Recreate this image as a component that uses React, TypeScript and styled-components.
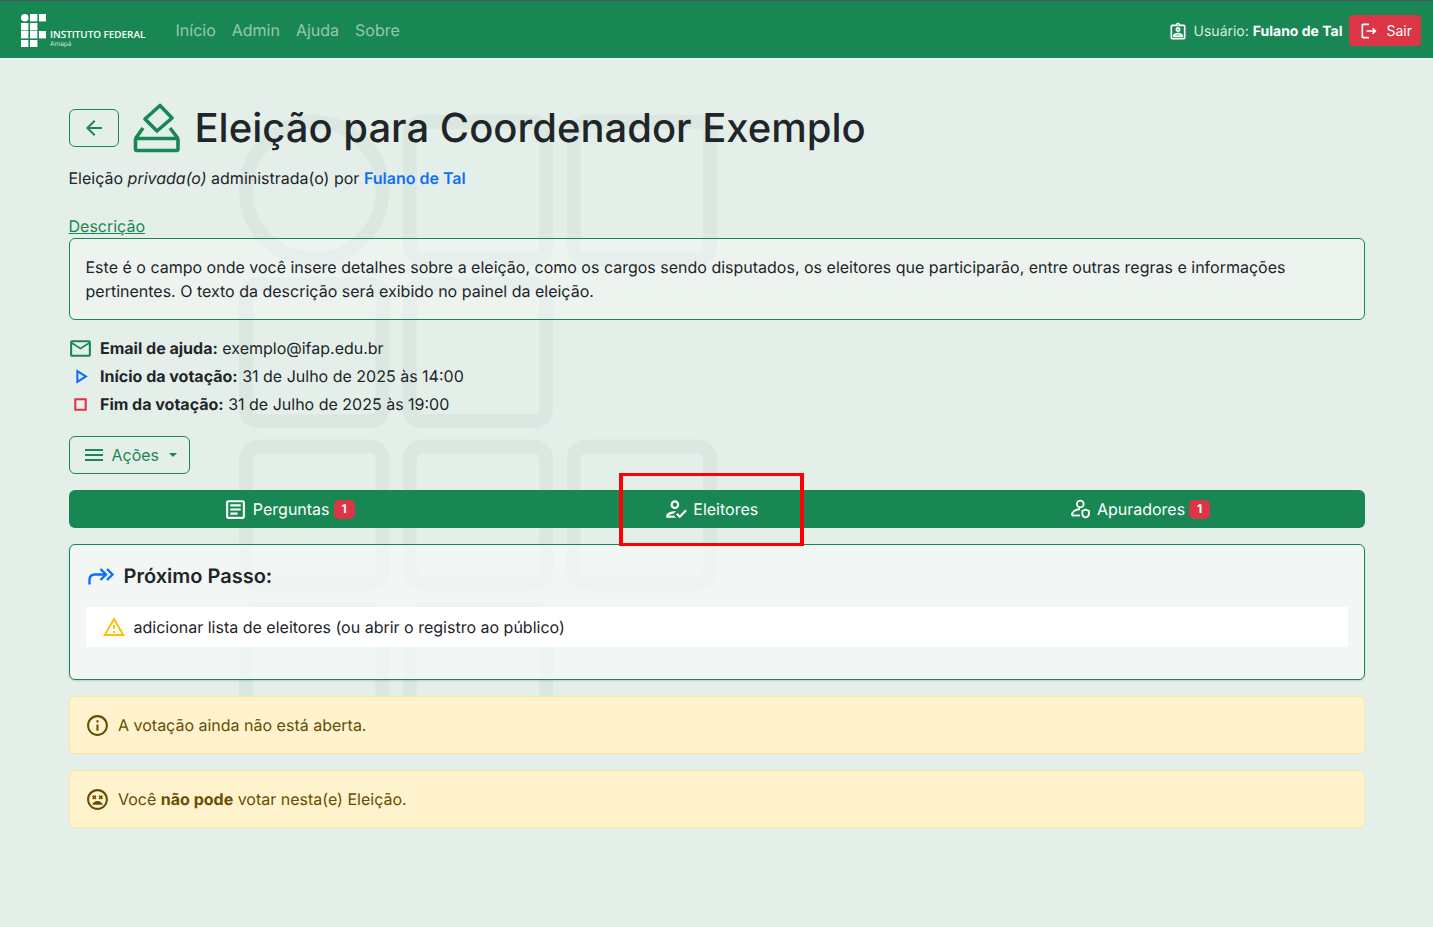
import React, { FC, ReactNode } from "react";
import styled, { createGlobalStyle } from "styled-components";
import {
  MdArrowBack,
  MdOutlineArticle,
  MdOutlineAssignmentInd,
  MdOutlineHowToReg,
  MdOutlineInfo,
  MdOutlineLogout,
  MdOutlineMailOutline,
  MdOutlineMenu,
  MdOutlinePlayArrow,
  MdOutlineSentimentVeryDissatisfied,
  MdOutlineStop,
  MdOutlineWarningAmber,
} from "react-icons/md";

const GlobalStyle = createGlobalStyle`
  * { box-sizing: border-box; }
  html, body { margin: 0; padding: 0; }
  body {
    background: #e5efea;
    color: #212529;
    font-family: Inter, "Liberation Sans", sans-serif;
    font-size: 16px;
    line-height: 24px;
    text-rendering: geometricPrecision;
  }
`;

const Page = styled.div`
  position: relative;
  min-height: 925px;
  overflow: hidden;
`;

const Watermark = styled.svg`
  position: absolute;
  left: 239px;
  top: 115px;
  z-index: 0;
`;

const NavBar = styled.nav`
  position: relative;
  z-index: 1;
  display: flex;
  align-items: center;
  height: 58px;
  padding: 0 12px 0 21px;
  background: #198754;
  border-top: 1px solid #4a5560;
`;

const Brand = styled.div`
  display: flex;
  align-items: flex-start;
  width: 146.5px;
  margin-right: 8px;
`;

const BrandText = styled.div`
  display: flex;
  flex-direction: column;
  margin: 17px 0 0 4px;
  color: #fff;
  font-family: "Open Sans", sans-serif;
  font-size: 9.9px;
  font-weight: 600;
  line-height: 10px;
  white-space: nowrap;
`;

const BrandPlace = styled.span`
  margin-top: 1px;
  font-family: Inter, sans-serif;
  font-size: 6.5px;
  font-weight: 400;
  line-height: 8px;
  opacity: 0.75;
`;

const NavLinks = styled.div`
  display: flex;
  flex: 1;
  gap: 16px;
`;

const NavLink = styled.a`
  color: rgba(255, 255, 255, 0.55);
`;

const UserInfo = styled.div`
  display: flex;
  align-items: center;
  gap: 6px;
  margin: 4px 7px 0 0;
  color: rgba(255, 255, 255, 0.85);
  font-size: 14px;

  b {
    color: #fff;
    font-weight: 700;
  }
`;

const LogoutButton = styled.button`
  display: flex;
  align-items: center;
  gap: 7px;
  height: 31px;
  margin-top: 1px;
  padding: 1px 9px 0 10px;
  border: 0;
  border-radius: 4px;
  background: #dc3545;
  color: #fff;
  font: inherit;
  font-size: 14px;
`;

const Main = styled.main`
  position: relative;
  z-index: 1;
  display: flex;
  flex-direction: column;
  padding: 46px 68.5px 0;
`;

const TitleRow = styled.div`
  display: flex;
  align-items: center;
  height: 48px;
  color: #198754;
`;

const BackButton = styled.button`
  display: flex;
  align-items: center;
  justify-content: center;
  width: 50px;
  height: 38px;
  margin-right: 14.5px;
  border: 1px solid #198754;
  border-radius: 6px;
  background: transparent;
  color: #198754;
`;

const Title = styled.h1`
  margin: 0 0 0 13.5px;
  color: #212529;
  font-size: 40px;
  font-weight: 500;
  line-height: 48px;
`;

const Subtitle = styled.p`
  margin: 14px 0 0;

  a {
    color: #0d6efd;
    font-weight: 600;
  }
`;

const DescriptionLabel = styled.a`
  margin-top: 24px;
  color: #198754;
  text-decoration: underline;
  align-self: flex-start;
  height: 24px;
  line-height: 24px;
`;

const DescriptionBox = styled.div`
  padding: 16px;
  border: 1px solid #198754;
  border-radius: 6px;
  background: rgba(255, 255, 255, 0.3);
`;

const MetaList = styled.div`
  display: flex;
  flex-direction: column;
  gap: 4px;
  margin-top: 16px;
`;

const MetaRow = styled.div`
  display: flex;
  align-items: center;
  gap: 7.5px;

  b {
    font-weight: 700;
  }
`;

const MetaIcon = styled.span<{ $color: string }>`
  display: flex;
  align-items: center;
  justify-content: center;
  width: 24px;
  height: 24px;
  color: ${(p) => p.$color};

  svg {
    flex-shrink: 0;
  }
`;

const ActionsButton = styled.button`
  display: flex;
  align-items: center;
  align-self: flex-start;
  gap: 6px;
  height: 38px;
  margin-top: 20px;
  padding: 0 12px;
  border: 1px solid #198754;
  border-radius: 6px;
  background: transparent;
  color: #198754;
  font: inherit;

  &::after {
    content: "";
    margin-left: 4px;
    border-top: 4.8px solid currentColor;
    border-left: 4.8px solid transparent;
    border-right: 4.8px solid transparent;
  }
`;

const Tabs = styled.div`
  display: flex;
  height: 38px;
  margin-top: 16px;
  border-radius: 6px;
  background: #198754;
`;

const Tab = styled.a`
  display: flex;
  flex: 1 1 auto;
  align-items: center;
  justify-content: center;
  gap: 4px;
  color: #fff;
`;

const TabIcon = styled.span`
  display: flex;
  width: 26px;
  justify-content: center;
`;

const Badge = styled.span`
  display: flex;
  align-items: center;
  justify-content: center;
  width: 21px;
  height: 19px;
  border-radius: 5px;
  background: #dc3545;
  color: #fff;
  font-size: 12px;
  font-weight: 700;
`;

const StepCard = styled.section`
  height: 136px;
  margin-top: 16px;
  padding: 16px;
  border: 1px solid #198754;
  border-radius: 6px;
  background: rgba(255, 255, 255, 0.5);
  box-shadow: 0 1px 2px rgba(0, 0, 0, 0.15);
`;

const StepTitle = styled.h5`
  display: flex;
  align-items: center;
  gap: 10px;
  height: 30px;
  margin: 0;
  padding-left: 2px;
  font-size: 20px;
  font-weight: 600;
`;

const StepItem = styled.div`
  display: flex;
  align-items: center;
  gap: 8px;
  height: 40px;
  margin-top: 16px;
  padding: 0 16px;
  background: #fff;
`;

const Alert = styled.div`
  display: flex;
  align-items: center;
  gap: 8px;
  height: 58px;
  margin-top: 16px;
  padding: 0 15.5px;
  border: 1px solid #ffe69c;
  border-radius: 6px;
  background: #fff3cd;
  color: #664d03;

  b {
    font-weight: 700;
  }
`;

const Callout = styled.div`
  position: absolute;
  z-index: 2;
  left: 619px;
  top: 473px;
  width: 185px;
  height: 73px;
  border-style: solid;
  border-color: #f00;
  border-width: 3px 4px;
`;

const WatermarkCell: FC<{ col: number; row: number; round?: boolean }> = ({ col, row, round }) => (
  <rect
    x={col * 163.8 + 7}
    y={row * 162.3 + 7}
    width={136.5}
    height={137}
    rx={round ? 68.25 : 12}
    fill="none"
    stroke="#dbe8e2"
    strokeWidth={14}
  />
);

const BrandMark: FC = () => (
  <svg width="25" height="33" viewBox="0 0 25 33" fill="#fff" style={{ marginTop: 2 }}>
    <circle cx="3.8" cy="3.8" r="3.8" />
    {[
      [9, 0],
      [18, 0],
      [0, 9],
      [9, 9],
      [0, 17],
      [9, 17],
      [18, 17],
      [0, 26],
      [9, 26],
    ].map(([x, y]) => (
      <rect key={`${x}-${y}`} x={x} y={y} width="7.4" height="7.4" />
    ))}
  </svg>
);

const BallotIcon: FC = () => (
  <svg width="48" height="52" viewBox="0 0 48 52" fill="none" stroke="#198754" strokeWidth="3.6" strokeLinejoin="round">
    <path d="M27 3.5L39 16L24 29L12 17Z" />
    <path d="M10 26L2.5 36.5" />
    <path d="M37 26L45 36.5" />
    <rect x="2.5" y="36.5" width="42.5" height="12" rx="1.5" />
  </svg>
);

const NextIcon: FC = () => (
  <svg width="26" height="18" viewBox="0 0 26 18" fill="none" stroke="#0d6efd" strokeWidth="2.4">
    <path d="M1.5 17.5V13C1.5 9.5 3.5 7.5 7 7.5H17" />
    <path d="M12.5 2L18 7.5L12.5 13" />
    <path d="M19 2L24.5 7.5L19 13" />
  </svg>
);

const CounterIcon: FC = () => (
  <svg width="22" height="22" viewBox="0 0 22 22" fill="none" stroke="#fff" strokeWidth="1.8">
    <circle cx="11.3" cy="6" r="3.4" />
    <path d="M3 17.5C2.5 14 6 11.5 11 11" />
    <path d="M3 17.5H11" />
    <path d="M16.6 11.5L20 13V15.5C20 17.5 18.5 19 16.6 19.5C14.7 19 13.3 17.5 13.3 15.5V13Z" />
  </svg>
);

const Meta: FC<{ color: string; icon: ReactNode; label: string; value: string }> = ({ color, icon, label, value }) => (
  <MetaRow>
    <MetaIcon $color={color}>{icon}</MetaIcon>
    <span>
      <b>{label}</b> {value}
    </span>
  </MetaRow>
);

export default function App() {
  return (
    <Page>
      <GlobalStyle />
      <Watermark width="480" height="640" viewBox="0 0 480 640">
        <WatermarkCell col={0} row={0} round />
        <WatermarkCell col={1} row={0} />
        <WatermarkCell col={2} row={0} />
        <WatermarkCell col={0} row={1} />
        <WatermarkCell col={1} row={1} />
        <WatermarkCell col={0} row={2} />
        <WatermarkCell col={1} row={2} />
        <WatermarkCell col={2} row={2} />
        <WatermarkCell col={0} row={3} />
        <WatermarkCell col={1} row={3} />
      </Watermark>

      <NavBar>
        <Brand>
          <BrandMark />
          <BrandText>
            INSTITUTO FEDERAL
            <BrandPlace>Amapá</BrandPlace>
          </BrandText>
        </Brand>
        <NavLinks>
          <NavLink>Início</NavLink>
          <NavLink>Admin</NavLink>
          <NavLink>Ajuda</NavLink>
          <NavLink>Sobre</NavLink>
        </NavLinks>
        <UserInfo>
          <MdOutlineAssignmentInd size={20} color="#fff" />
          <span>
            Usuário: <b>Fulano de Tal</b>
          </span>
        </UserInfo>
        <LogoutButton>
          <MdOutlineLogout size={20} />
          Sair
        </LogoutButton>
      </NavBar>

      <Main>
        <TitleRow>
          <BackButton>
            <MdArrowBack size={24} />
          </BackButton>
          <BallotIcon />
          <Title>Eleição para Coordenador Exemplo</Title>
        </TitleRow>
        <Subtitle>
          Eleição <i>privada(o)</i> administrada(o) por <a>Fulano de Tal</a>
        </Subtitle>

        <DescriptionLabel>Descrição</DescriptionLabel>
        <DescriptionBox>
          Este é o campo onde você insere detalhes sobre a eleição, como os cargos sendo disputados, os eleitores que
          participarão, entre outras regras e informações pertinentes. O texto da descrição será exibido no painel da
          eleição.
        </DescriptionBox>

        <MetaList>
          <Meta color="#198754" icon={<MdOutlineMailOutline size={25} />} label="Email de ajuda:" value="exemplo@ifap.edu.br" />
          <Meta color="#0d6efd" icon={<MdOutlinePlayArrow size={25} />} label="Início da votação:" value="31 de Julho de 2025 às 14:00" />
          <Meta color="#dc3545" icon={<MdOutlineStop size={25} />} label="Fim da votação:" value="31 de Julho de 2025 às 19:00" />
        </MetaList>

        <ActionsButton>
          <MdOutlineMenu size={24} />
          Ações
        </ActionsButton>

        <Tabs>
          <Tab>
            <TabIcon>
              <MdOutlineArticle size={25} />
            </TabIcon>
            Perguntas
            <Badge>1</Badge>
          </Tab>
          <Tab>
            <TabIcon>
              <MdOutlineHowToReg size={26} />
            </TabIcon>
            Eleitores
          </Tab>
          <Tab>
            <TabIcon>
              <CounterIcon />
            </TabIcon>
            Apuradores
            <Badge>1</Badge>
          </Tab>
        </Tabs>

        <StepCard>
          <StepTitle>
            <NextIcon />
            Próximo Passo:
          </StepTitle>
          <StepItem>
            <MdOutlineWarningAmber size={24} color="#ffc107" />
            adicionar lista de eleitores (ou abrir o registro ao público)
          </StepItem>
        </StepCard>

        <Alert>
          <MdOutlineInfo size={25} />A votação ainda não está aberta.
        </Alert>
        <Alert>
          <MdOutlineSentimentVeryDissatisfied size={25} />
          <span>
            Você <b>não pode</b> votar nesta(e) Eleição.
          </span>
        </Alert>
      </Main>

      <Callout />
    </Page>
  );
}
